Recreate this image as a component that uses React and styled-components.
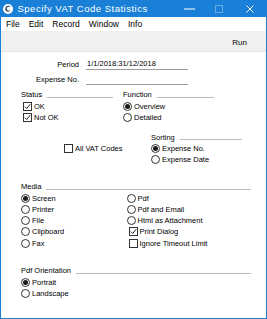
import React from "react";
import styled, { createGlobalStyle } from "styled-components";

const Global = createGlobalStyle`
  html, body { margin: 0; padding: 0; background: #fff; }
  body { font-family: "Liberation Sans", Arial, sans-serif; color: #000; }
  * { box-sizing: border-box; }
`;

const BLUE = "#1a7fd7";

const Window = styled.div`
  width: 267px;
  height: 319px;
  border: 1px solid ${BLUE};
  border-top: none;
  display: flex;
  flex-direction: column;
  background: #fff;
  overflow: hidden;
`;

const TitleBar = styled.div`
  height: 17px;
  flex: none;
  background: ${BLUE};
  display: flex;
  align-items: center;
  padding-left: 2px;
  color: #fff;
`;

const TitleText = styled.span`
  font-size: 9.5px;
  letter-spacing: 0.5px;
  margin-left: 4.5px;
  white-space: nowrap;
  flex: none;
`;

const Controls = styled.div`
  margin-left: auto;
  display: flex;
  height: 100%;
`;

const ControlButton = styled.div`
  width: ${(p) => p.$w}px;
  height: 100%;
  display: flex;
  align-items: center;
  justify-content: center;
`;

const MenuBar = styled.div`
  height: 14px;
  flex: none;
  display: flex;
  align-items: center;
  gap: 9px;
  padding-left: 5px;
  font-size: 8.5px;
  color: #000;
`;

const Toolbar = styled.div`
  height: 21px;
  flex: none;
  background: #f0f0f0;
  display: flex;
  justify-content: flex-end;
  align-items: center;
  padding: 3px 19px 0 0;
  font-size: 8px;
  color: #000;
  border-bottom: 1px solid #e6e6e6;
`;

const Content = styled.div`
  display: flex;
  flex-direction: column;
  padding: 0 15px 0 20px;
  font-size: 7.5px;
  color: #000;
`;

const FormRow = styled.div`
  display: grid;
  grid-template-columns: 58px 102px;
  column-gap: 7px;
  height: 15px;
  margin-top: ${(p) => p.$mt || 0}px;
`;

const Label = styled.div`
  text-align: right;
  line-height: 15px;
  white-space: nowrap;
`;

const Field = styled.div`
  margin-top: 2px;
  height: 11px;
  line-height: 10px;
  padding-left: 1px;
  border-bottom: 1px solid #9c9c9c;
  white-space: nowrap;
`;

const Section = styled.div`
  margin-top: ${(p) => p.$mt || 0}px;
  display: ${(p) => (p.$cols ? "grid" : "block")};
  grid-template-columns: ${(p) => p.$cols || "none"};
  column-gap: ${(p) => p.$gap || 0}px;
`;

const Column = styled.div`
  display: flex;
  flex-direction: column;
  padding-top: ${(p) => p.$pt || 0}px;
  padding-left: ${(p) => p.$pl || 0}px;
`;

const HeaderRow = styled.div`
  display: flex;
  align-items: center;
  height: 12px;
  white-space: nowrap;
`;

const Rule = styled.div`
  flex: 1;
  height: 1px;
  background: #bcbcbc;
  margin: 5px 0 0 5px;
`;

const OptionRow = styled.div`
  display: flex;
  align-items: center;
  height: 11.25px;
  padding-left: ${(p) => (p.$check ? 2 : 0)}px;
  white-space: nowrap;
`;

const Box = styled.span`
  width: 9px;
  height: 9px;
  flex: none;
  border: 1px solid #333;
  background: #fff;
  margin-right: 2px;
  display: flex;
  align-items: center;
  justify-content: center;
`;

const Circle = styled.span`
  width: 9px;
  height: 9px;
  flex: none;
  border: 1px solid #333;
  border-radius: 50%;
  background: #fff;
  margin-right: 2px;
  display: flex;
  align-items: center;
  justify-content: center;
  &::after {
    content: "";
    display: ${(p) => (p.$on ? "block" : "none")};
    width: 5px;
    height: 5px;
    border-radius: 50%;
    background: #1a1a1a;
  }
`;

const Check = ({ on, children }) => (
  <OptionRow $check>
    <Box>
      {on && (
        <svg width="7" height="7" viewBox="0 0 7 7">
          <path d="M0.8 3.6 L2.7 5.5 L6.2 1.2" fill="none" stroke="#222" strokeWidth="1" />
        </svg>
      )}
    </Box>
    {children}
  </OptionRow>
);

const Radio = ({ on, children }) => (
  <OptionRow>
    <Circle $on={on} />
    {children}
  </OptionRow>
);

const Header = ({ children }) => (
  <HeaderRow>
    {children}
    <Rule />
  </HeaderRow>
);

const AppIcon = () => (
  <svg width="10" height="10" viewBox="0 0 10 10">
    <circle cx="5" cy="5" r="5" fill="#fff" />
    <path d="M7.6 3.2 C6.8 1.6 4.2 1.3 2.9 2.9 C1.7 4.4 2.3 7 4.4 7.6 C5.8 8 7.2 7.2 7.5 6 C6.6 6.9 5 6.9 4.2 6 C3.4 5.1 3.6 3.7 4.6 3.1 C5.6 2.5 6.9 2.7 7.6 3.2 Z" fill="#1f3550" />
  </svg>
);

export default function App() {
  return (
    <>
      <Global />
      <Window>
        <TitleBar>
          <AppIcon />
          <TitleText>Specify VAT Code Statistics</TitleText>
          <Controls>
            <ControlButton $w={29}>
              <svg width="11" height="2" viewBox="0 0 11 2">
                <rect x="0" y="0.5" width="11" height="1" fill="#fff" />
              </svg>
            </ControlButton>
            <ControlButton $w={29}>
              <svg width="8" height="8" viewBox="0 0 8 8">
                <rect x="0.5" y="0.5" width="7" height="7" fill="none" stroke="rgba(255,255,255,0.35)" />
              </svg>
            </ControlButton>
            <ControlButton $w={33}>
              <svg width="8" height="8" viewBox="0 0 8 8">
                <path d="M0.5 0.5 L7.5 7.5 M7.5 0.5 L0.5 7.5" stroke="#fff" strokeWidth="1" />
              </svg>
            </ControlButton>
          </Controls>
        </TitleBar>
        <MenuBar>
          <span>File</span>
          <span>Edit</span>
          <span>Record</span>
          <span>Window</span>
          <span>Info</span>
        </MenuBar>
        <Toolbar>Run</Toolbar>
        <Content>
          <FormRow $mt={5}>
            <Label>Period</Label>
            <Field>1/1/2018:31/12/2018</Field>
          </FormRow>
          <FormRow>
            <Label>Expense No.</Label>
            <Field />
          </FormRow>

          <Section $mt={1.5} $cols="92px 91px" $gap={10}>
            <Column>
              <Header>Status</Header>
              <Check on>OK</Check>
              <Check on>Not OK</Check>
            </Column>
            <Column>
              <Header>Function</Header>
              <Radio on>Overview</Radio>
              <Radio>Detailed</Radio>
            </Column>
          </Section>

          <Section $mt={8} $cols="130px 91px">
            <Column $pt={12} $pl={41}>
              <Check>All VAT Codes</Check>
            </Column>
            <Column>
              <Header>Sorting</Header>
              <Radio on>Expense No.</Radio>
              <Radio>Expense Date</Radio>
            </Column>
          </Section>

          <Section $mt={15}>
            <Header>Media</Header>
          </Section>
          <Section $cols="105.5px 1fr">
            <Column>
              <Radio on>Screen</Radio>
              <Radio>Printer</Radio>
              <Radio>File</Radio>
              <Radio>Clipboard</Radio>
              <Radio>Fax</Radio>
            </Column>
            <Column>
              <Radio>Pdf</Radio>
              <Radio>Pdf and Email</Radio>
              <Radio>Html as Attachment</Radio>
              <Check on>Print Dialog</Check>
              <Check>Ignore Timeout Limit</Check>
            </Column>
          </Section>

          <Section $mt={16}>
            <Header>Pdf Orientation</Header>
            <Radio on>Portrait</Radio>
            <Radio>Landscape</Radio>
          </Section>
        </Content>
      </Window>
    </>
  );
}
